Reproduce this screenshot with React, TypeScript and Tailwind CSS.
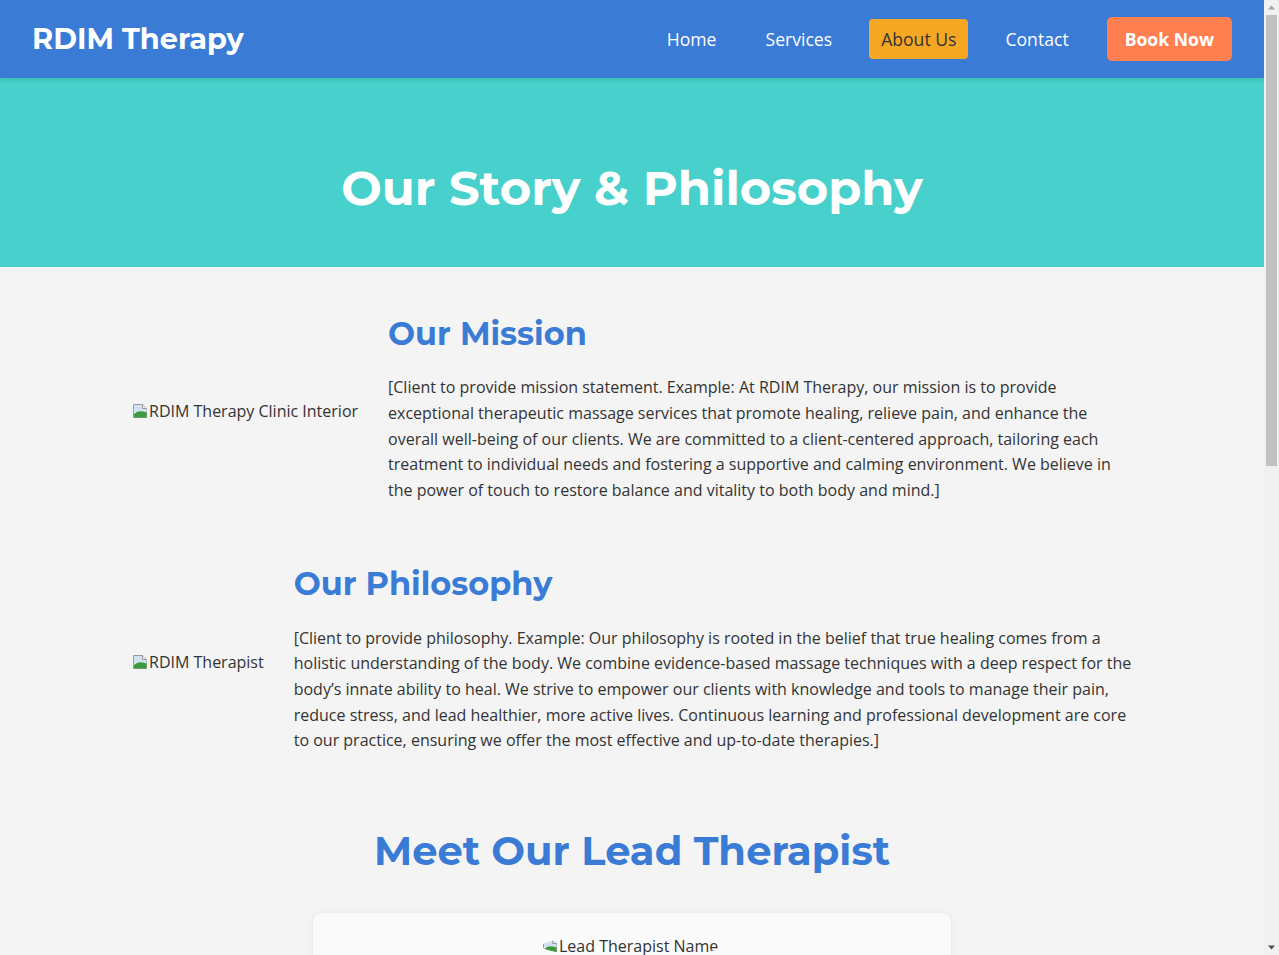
const heading = "font-['Montserrat','Inter',sans-serif] font-bold";

const BrokenImage = ({ alt }: { alt: string }) => (
  <span className="inline-flex items-center whitespace-nowrap text-[#333]">
    <svg width="16" height="16" viewBox="0 0 16 16" className="shrink-0 mr-px">
      <path d="M1.5 1.5h9l4 4v9h-13z" fill="#fff" stroke="#9a9a9a" />
      <path d="M2 2h8.5v4h4v3H2z" fill="#cfe3f5" />
      <path d="M2 14.5V11c3-3 7-3.5 12.5-1.5v5z" fill="#3d9a3d" />
      <path d="M10.5 1.5v4h4" fill="#eee" stroke="#9a9a9a" />
    </svg>
    {alt}
  </span>
);

const NavLink = ({ label, active }: { label: string; active?: boolean }) => (
  <a
    href="#"
    className={
      active
        ? "px-3 py-[7px] rounded-[4px] bg-[#f5a623] text-[#333]"
        : "px-3 py-[7px] rounded-[4px] text-white"
    }
  >
    {label}
  </a>
);

const Header = () => (
  <header className="relative z-10 h-[78px] bg-[#3a7bd5] px-8 flex items-center justify-between shadow-[0_2px_5px_rgba(0,0,0,0.12)]">
    <div className={`${heading} text-[28.8px] text-white leading-none`}>RDIM Therapy</div>
    <nav className="flex items-center gap-[25px] text-[17.6px]">
      <NavLink label="Home" />
      <NavLink label="Services" />
      <NavLink label="About Us" active />
      <NavLink label="Contact" />
      <a
        href="#"
        className="ml-px h-[44px] px-[18px] flex items-center rounded-[5px] bg-[#ff7f50] text-white font-bold"
      >
        Book Now
      </a>
    </nav>
  </header>
);

const Row = ({ alt, title, text }: { alt: string; title: string; text: string }) => (
  <div className="flex items-center gap-[30px]">
    <span className="pt-[6px]">
      <BrokenImage alt={alt} />
    </span>
    <div>
      <h2 className={`${heading} text-[32px] leading-[1.2] text-[#3a7bd5] mb-[22px]`}>{title}</h2>
      <p className="leading-[1.6]">{text}</p>
    </div>
  </div>
);

// classic scrollbar look (the headless browser hides the real one)
const ScrollBar = () => (
  <div className="w-[15px] shrink-0 bg-[#f1f1f1] flex flex-col items-center">
    <svg width="15" height="15" viewBox="0 0 15 15" className="shrink-0">
      <path d="M4 9.5h7L7.5 5.5z" fill="#a3a3a3" />
    </svg>
    <div className="w-[11px] h-[451px] bg-[#c1c1c1]" />
    <div className="flex-1" />
    <svg width="15" height="15" viewBox="0 0 15 15" className="shrink-0">
      <path d="M4 5.5h7L7.5 9.5z" fill="#505050" />
    </svg>
  </div>
);

export default function App() {
  return (
    <div className="h-screen flex overflow-hidden bg-[#f4f4f4] text-[#333] font-['Open_Sans','Noto_Sans',sans-serif] text-base">
      <div className="flex-1 min-w-0 overflow-y-auto">
        <Header />
        <section className="bg-[#48d1cc] h-[189px] pt-[32px] flex items-center justify-center">
          <h1 className={`${heading} text-[48px] text-white leading-[1.2]`}>Our Story &amp; Philosophy</h1>
        </section>

        <main className="w-[1000px] mx-auto pt-[48px]">
          <div className="flex flex-col gap-[62px]">
            <Row
              alt="RDIM Therapy Clinic Interior"
              title="Our Mission"
              text="[Client to provide mission statement. Example: At RDIM Therapy, our mission is to provide exceptional therapeutic massage services that promote healing, relieve pain, and enhance the overall well-being of our clients. We are committed to a client-centered approach, tailoring each treatment to individual needs and fostering a supportive and calming environment. We believe in the power of touch to restore balance and vitality to both body and mind.]"
            />
            <Row
              alt="RDIM Therapist"
              title="Our Philosophy"
              text="[Client to provide philosophy. Example: Our philosophy is rooted in the belief that true healing comes from a holistic understanding of the body. We combine evidence-based massage techniques with a deep respect for the body’s innate ability to heal. We strive to empower our clients with knowledge and tools to manage their pain, reduce stress, and lead healthier, more active lives. Continuous learning and professional development are core to our practice, ensuring we offer the most effective and up-to-date therapies.]"
            />
          </div>

          <section className="mt-[73px] pb-[60px]">
            <h2 className={`${heading} text-[40px] leading-[1.2] text-[#3a7bd5] text-center`}>Meet Our Lead Therapist</h2>
            <div className="w-[640px] mx-auto mt-[37px] bg-[#fafafa] rounded-[10px] border border-[#ececec] shadow-[0_2px_8px_rgba(0,0,0,0.05)] pt-[22px] px-[30px] pb-[30px] text-center">
              <div className="flex justify-center">
                <span className="w-[180px] h-[22px] rounded-[50%] overflow-hidden flex">
                  <BrokenImage alt="Lead Therapist Name" />
                </span>
              </div>
              <h3 className={`${heading} text-[24px] text-[#3a7bd5] mt-[20px]`}>[Lead Therapist Name]</h3>
              <p className="text-[#777] italic mt-1">Registered Massage Therapist (RMT)</p>
              <p className="leading-[1.6] mt-4 text-left">
                [Client to provide a short biography of the lead therapist. Include their background, training, areas of expertise and what inspired them to pursue a career in massage therapy. This section helps new clients get to know the person behind the practice and builds trust before their first visit.]
              </p>
              <p className="leading-[1.6] mt-4 text-left">
                [Certifications and memberships: e.g. Registered with the College of Massage Therapists, certified in myofascial release, sports massage and prenatal massage.]
              </p>
            </div>
          </section>

          <section className="pb-[80px] text-center">
            <h2 className={`${heading} text-[32px] leading-[1.2] text-[#3a7bd5]`}>Ready to Feel Better?</h2>
            <p className="leading-[1.6] mt-4">Book your appointment today and take the first step towards lasting relief.</p>
            <a href="#" className="inline-block mt-6 px-6 py-3 rounded-[5px] bg-[#ff7f50] text-white font-bold">Book Now</a>
          </section>
        </main>

        <footer className="bg-[#2c3e50] text-white text-center py-8 text-sm">
          <p>&copy; 2024 RDIM Therapy. All rights reserved.</p>
          <p className="mt-2 text-[#bbb]">123 Wellness Ave, Suite 100 · (555) 123-4567 · info@rdimtherapy.com</p>
        </footer>
      </div>
      <ScrollBar />
    </div>
  );
}
